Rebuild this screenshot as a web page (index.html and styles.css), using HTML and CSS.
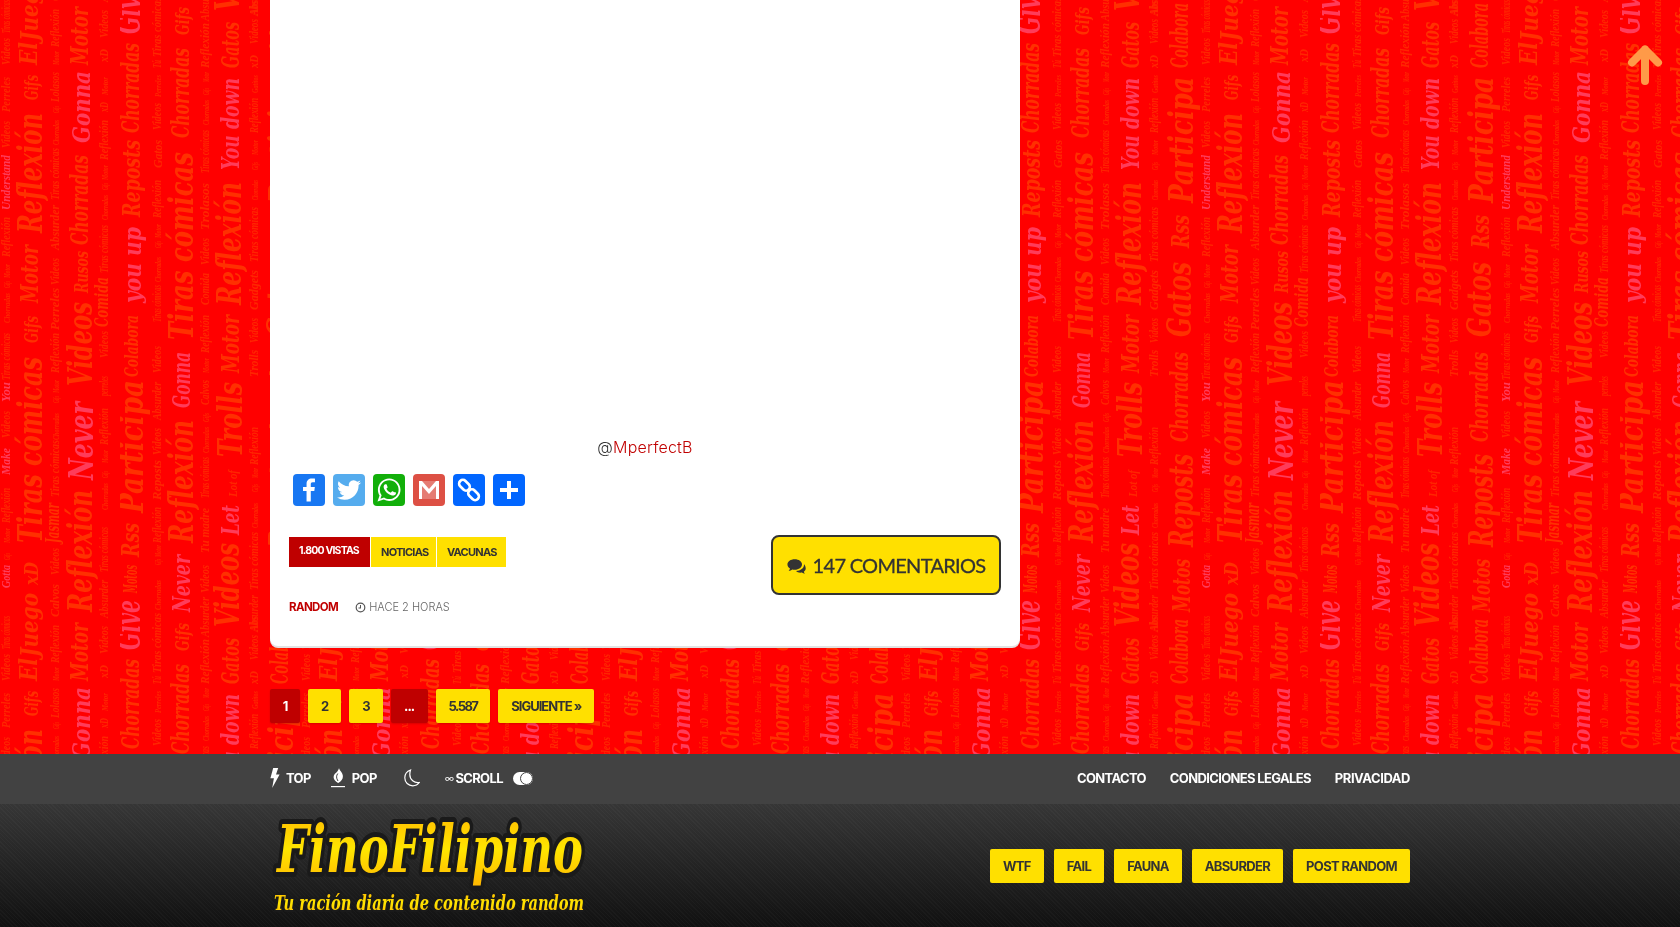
FILE: index.html
```html
<!DOCTYPE html>
<html lang="es">
<head>
<meta charset="utf-8">
<title>FinoFilipino</title>
<link rel="stylesheet" href="styles.css">
</head>
<body>
<svg class="wall" width="1680" height="927" aria-hidden="true">
  <defs>
    <g id="words">
      <!-- A -->
      <text class="lg o" transform="translate(19,133) rotate(-90)" textLength="90" lengthAdjust="spacingAndGlyphs">Chorradas</text>
      <text class="lg o" transform="translate(20,217) rotate(-90)" textLength="77" lengthAdjust="spacingAndGlyphs">Reposts</text>
      <text class="lg p" transform="translate(21,303) rotate(-90)" textLength="76" lengthAdjust="spacingAndGlyphs">you up</text>
      <text class="md o" transform="translate(18,377) rotate(-90)" textLength="62" lengthAdjust="spacingAndGlyphs">Colabora</text>
      <text class="xl o" transform="translate(23,513) rotate(-90)" textLength="133" lengthAdjust="spacingAndGlyphs">Participa</text>
      <text class="lg o" transform="translate(19,557) rotate(-90)" textLength="34" lengthAdjust="spacingAndGlyphs">Rss</text>
      <text class="md o" transform="translate(17,593) rotate(-90)" textLength="28" lengthAdjust="spacingAndGlyphs">Motos</text>
      <text class="xl p" transform="translate(20,650) rotate(-90)" textLength="50" lengthAdjust="spacingAndGlyphs">Give</text>
      <!-- B -->
      <text class="s o" transform="translate(41,673) rotate(-90)" textLength="60" lengthAdjust="spacingAndGlyphs">Tiras cómicas</text>
      <text class="s o" transform="translate(41,68) rotate(-90)" textLength="8" lengthAdjust="spacingAndGlyphs">Tú</text>
      <text class="xs o" transform="translate(41,97) rotate(-90)" textLength="22" lengthAdjust="spacingAndGlyphs">Perreles</text>
      <text class="s o" transform="translate(41,130) rotate(-90)" textLength="27" lengthAdjust="spacingAndGlyphs">Videos</text>
      <text class="s o" transform="translate(42,168) rotate(-90)" textLength="28" lengthAdjust="spacingAndGlyphs">Gatos</text>
      <text class="s o" transform="translate(41,218) rotate(-90)" textLength="38" lengthAdjust="spacingAndGlyphs">Reflexión</text>
      <text class="xs o" transform="translate(41,238) rotate(-90)" textLength="14" lengthAdjust="spacingAndGlyphs">Motor</text>
      <text class="xs o" transform="translate(41,248) rotate(-90)" textLength="7" lengthAdjust="spacingAndGlyphs">Gifs</text>
      <text class="xs o" transform="translate(41,282) rotate(-90)" textLength="25" lengthAdjust="spacingAndGlyphs">Chorradas</text>
      <text class="s o" transform="translate(41,322) rotate(-90)" textLength="37" lengthAdjust="spacingAndGlyphs">Tiras cómicas</text>
      <text class="s o" transform="translate(41,373) rotate(-90)" textLength="27" lengthAdjust="spacingAndGlyphs">Videos</text>
      <text class="s o" transform="translate(41,420) rotate(-90)" textLength="38" lengthAdjust="spacingAndGlyphs">Absurder</text>
      <text class="s o" transform="translate(41,455) rotate(-90)" textLength="27" lengthAdjust="spacingAndGlyphs">Videos</text>
      <text class="s o" transform="translate(41,500) rotate(-90)" textLength="40" lengthAdjust="spacingAndGlyphs">Reposts</text>
      <text class="s o" transform="translate(41,543) rotate(-90)" textLength="36" lengthAdjust="spacingAndGlyphs">Reflexión</text>
      <text class="xs o" transform="translate(41,557) rotate(-90)" textLength="12" lengthAdjust="spacingAndGlyphs">Motor</text>
      <text class="xs o" transform="translate(41,565) rotate(-90)" textLength="6" lengthAdjust="spacingAndGlyphs">Gifs</text>
      <text class="xs o" transform="translate(41,610) rotate(-90)" textLength="30" lengthAdjust="spacingAndGlyphs">Chorradas</text>
      <!-- C -->
      <text class="md o" transform="translate(69,35) rotate(-90)" textLength="28" lengthAdjust="spacingAndGlyphs">Gifs</text>
      <text class="lg o" transform="translate(69,138) rotate(-90)" textLength="90" lengthAdjust="spacingAndGlyphs">Chorradas</text>
      <text class="xl o" transform="translate(73,340) rotate(-90)" textLength="188" lengthAdjust="spacingAndGlyphs">Tiras cómicas</text>
      <text class="lg p" transform="translate(70,408) rotate(-90)" textLength="56" lengthAdjust="spacingAndGlyphs">Gonna</text>
      <text class="xl o" transform="translate(73,543) rotate(-90)" textLength="123" lengthAdjust="spacingAndGlyphs">Reflexión</text>
      <text class="lg p" transform="translate(70,612) rotate(-90)" textLength="57" lengthAdjust="spacingAndGlyphs">Never</text>
      <!-- D -->
      <text class="s o" transform="translate(89,637) rotate(-90)" textLength="40" lengthAdjust="spacingAndGlyphs">Absurder</text>
      <text class="s o" transform="translate(89,68) rotate(-90)" textLength="45" lengthAdjust="spacingAndGlyphs">Reflexión</text>
      <text class="xs o" transform="translate(89,82) rotate(-90)" textLength="10" lengthAdjust="spacingAndGlyphs">Motor</text>
      <text class="xs o" transform="translate(89,95) rotate(-90)" textLength="7" lengthAdjust="spacingAndGlyphs">Gifs</text>
      <text class="xs o" transform="translate(89,125) rotate(-90)" textLength="25" lengthAdjust="spacingAndGlyphs">Chorradas</text>
      <text class="s o" transform="translate(89,173) rotate(-90)" textLength="43" lengthAdjust="spacingAndGlyphs">Tiras cómicas</text>
      <text class="s o" transform="translate(89,230) rotate(-90)" textLength="47" lengthAdjust="spacingAndGlyphs">Trolasos</text>
      <text class="s o" transform="translate(89,265) rotate(-90)" textLength="27" lengthAdjust="spacingAndGlyphs">Videos</text>
      <text class="s o" transform="translate(89,305) rotate(-90)" textLength="32" lengthAdjust="spacingAndGlyphs">Comida</text>
      <text class="s o" transform="translate(89,353) rotate(-90)" textLength="38" lengthAdjust="spacingAndGlyphs">Reflexión</text>
      <text class="xs o" transform="translate(89,373) rotate(-90)" textLength="15" lengthAdjust="spacingAndGlyphs">Motor</text>
      <text class="s o" transform="translate(89,405) rotate(-90)" textLength="25" lengthAdjust="spacingAndGlyphs">Calvos</text>
      <text class="xs o" transform="translate(89,422) rotate(-90)" textLength="9" lengthAdjust="spacingAndGlyphs">Gifs</text>
      <text class="xs o" transform="translate(89,453) rotate(-90)" textLength="26" lengthAdjust="spacingAndGlyphs">Chorradas</text>
      <text class="s o" transform="translate(89,498) rotate(-90)" textLength="41" lengthAdjust="spacingAndGlyphs">Tiras cómicas</text>
      <text class="s o" transform="translate(89,553) rotate(-90)" textLength="45" lengthAdjust="spacingAndGlyphs">Tu madre</text>
      <text class="s o" transform="translate(89,593) rotate(-90)" textLength="28" lengthAdjust="spacingAndGlyphs">Videos</text>
      <!-- E -->
      <text class="xl o" transform="translate(119,627) rotate(-90)" textLength="84" lengthAdjust="spacingAndGlyphs">Videos</text>
      <text class="lg o" transform="translate(119,68) rotate(-90)" textLength="46" lengthAdjust="spacingAndGlyphs">Gatos</text>
      <text class="lg p" transform="translate(119,170) rotate(-90)" textLength="92" lengthAdjust="spacingAndGlyphs">You down</text>
      <text class="xl o" transform="translate(121,305) rotate(-90)" textLength="123" lengthAdjust="spacingAndGlyphs">Reflexión</text>
      <text class="lg o" transform="translate(119,373) rotate(-90)" textLength="58" lengthAdjust="spacingAndGlyphs">Motor</text>
      <text class="xl o" transform="translate(122,457) rotate(-90)" textLength="75" lengthAdjust="spacingAndGlyphs">Trolls</text>
      <text class="s o" transform="translate(117,497) rotate(-90)" textLength="27" lengthAdjust="spacingAndGlyphs">Lot of</text>
      <text class="lg p" transform="translate(119,535) rotate(-90)" textLength="30" lengthAdjust="spacingAndGlyphs">Let</text>
      <!-- F -->
      <text class="s o" transform="translate(138,15) rotate(-90)" textLength="15" lengthAdjust="spacingAndGlyphs">Abs</text>
      <text class="s o" transform="translate(138,44) rotate(-90)" textLength="25" lengthAdjust="spacingAndGlyphs">Videos</text>
      <text class="s o" transform="translate(138,68) rotate(-90)" textLength="13" lengthAdjust="spacingAndGlyphs">xD</text>
      <text class="xs o" transform="translate(138,93) rotate(-90)" textLength="18" lengthAdjust="spacingAndGlyphs">Gatitos</text>
      <text class="s o" transform="translate(138,133) rotate(-90)" textLength="35" lengthAdjust="spacingAndGlyphs">Reflexión</text>
      <text class="xs o" transform="translate(138,155) rotate(-90)" textLength="15" lengthAdjust="spacingAndGlyphs">Motor</text>
      <text class="xs o" transform="translate(138,170) rotate(-90)" textLength="8" lengthAdjust="spacingAndGlyphs">Gifs</text>
      <text class="xs o" transform="translate(138,200) rotate(-90)" textLength="20" lengthAdjust="spacingAndGlyphs">Chorradas</text>
      <text class="s o" transform="translate(138,262) rotate(-90)" textLength="55" lengthAdjust="spacingAndGlyphs">Tiras cómicas</text>
      <text class="s o" transform="translate(138,310) rotate(-90)" textLength="40" lengthAdjust="spacingAndGlyphs">Gadgets</text>
      <text class="s o" transform="translate(138,343) rotate(-90)" textLength="25" lengthAdjust="spacingAndGlyphs">Videos</text>
      <text class="s o" transform="translate(138,377) rotate(-90)" textLength="27" lengthAdjust="spacingAndGlyphs">Trolls</text>
      <text class="s o" transform="translate(138,465) rotate(-90)" textLength="38" lengthAdjust="spacingAndGlyphs">Reflexión</text>
      <text class="xs o" transform="translate(138,478) rotate(-90)" textLength="10" lengthAdjust="spacingAndGlyphs">Motor</text>
      <text class="xs o" transform="translate(138,492) rotate(-90)" textLength="8" lengthAdjust="spacingAndGlyphs">Gifs</text>
      <text class="xs o" transform="translate(138,528) rotate(-90)" textLength="25" lengthAdjust="spacingAndGlyphs">Chorradas</text>
      <text class="s o" transform="translate(138,590) rotate(-90)" textLength="58" lengthAdjust="spacingAndGlyphs">Tiras cómicas</text>
      <text class="s o" transform="translate(138,632) rotate(-90)" textLength="37" lengthAdjust="spacingAndGlyphs">Absurder</text>
      <!-- G -->
      <text class="lg o" transform="translate(168,68) rotate(-90)" textLength="65" lengthAdjust="spacingAndGlyphs">Colabora</text>
      <text class="xl o" transform="translate(173,203) rotate(-90)" textLength="126" lengthAdjust="spacingAndGlyphs">Participa</text>
      <text class="lg o" transform="translate(169,248) rotate(-90)" textLength="33" lengthAdjust="spacingAndGlyphs">Rss</text>
      <text class="xl o" transform="translate(171,337) rotate(-90)" textLength="75" lengthAdjust="spacingAndGlyphs">Gatos</text>
      <text class="lg o" transform="translate(168,442) rotate(-90)" textLength="90" lengthAdjust="spacingAndGlyphs">Chorradas</text>
      <text class="xl o" transform="translate(173,547) rotate(-90)" textLength="93" lengthAdjust="spacingAndGlyphs">Reposts</text>
      <text class="lg o" transform="translate(170,612) rotate(-90)" textLength="53" lengthAdjust="spacingAndGlyphs">Motos</text>
      <!-- H -->
      <text class="s o" transform="translate(190,33) rotate(-90)" textLength="33" lengthAdjust="spacingAndGlyphs">Tiras cómicas</text>
      <text class="s o" transform="translate(190,65) rotate(-90)" textLength="27" lengthAdjust="spacingAndGlyphs">Videos</text>
      <text class="s o" transform="translate(190,112) rotate(-90)" textLength="35" lengthAdjust="spacingAndGlyphs">Perreles</text>
      <text class="s o" transform="translate(190,148) rotate(-90)" textLength="27" lengthAdjust="spacingAndGlyphs">Videos</text>
      <text class="s p" transform="translate(190,210) rotate(-90)" textLength="55" lengthAdjust="spacingAndGlyphs">Understand</text>
      <text class="s o" transform="translate(190,257) rotate(-90)" textLength="40" lengthAdjust="spacingAndGlyphs">Reflexión</text>
      <text class="xs o" transform="translate(190,278) rotate(-90)" textLength="14" lengthAdjust="spacingAndGlyphs">Motor</text>
      <text class="xs o" transform="translate(190,288) rotate(-90)" textLength="7" lengthAdjust="spacingAndGlyphs">Gifs</text>
      <text class="xs o" transform="translate(190,323) rotate(-90)" textLength="30" lengthAdjust="spacingAndGlyphs">Chorradas</text>
      <text class="s o" transform="translate(190,380) rotate(-90)" textLength="47" lengthAdjust="spacingAndGlyphs">Tiras cómicas</text>
      <text class="s p" transform="translate(190,402) rotate(-90)" textLength="20" lengthAdjust="spacingAndGlyphs">You</text>
      <text class="s o" transform="translate(190,438) rotate(-90)" textLength="27" lengthAdjust="spacingAndGlyphs">Videos</text>
      <text class="s p" transform="translate(190,475) rotate(-90)" textLength="27" lengthAdjust="spacingAndGlyphs">Make</text>
      <text class="s o" transform="translate(190,523) rotate(-90)" textLength="35" lengthAdjust="spacingAndGlyphs">Reflexión</text>
      <text class="xs o" transform="translate(190,543) rotate(-90)" textLength="15" lengthAdjust="spacingAndGlyphs">Motor</text>
      <text class="xs o" transform="translate(190,560) rotate(-90)" textLength="7" lengthAdjust="spacingAndGlyphs">Gifs</text>
      <text class="s p" transform="translate(190,588) rotate(-90)" textLength="23" lengthAdjust="spacingAndGlyphs">Gotta</text>
      <!-- I -->
      <text class="lg o" transform="translate(217,65) rotate(-90)" textLength="23" lengthAdjust="spacingAndGlyphs">El</text>
      <text class="md o" transform="translate(218,100) rotate(-90)" textLength="25" lengthAdjust="spacingAndGlyphs">Gifs</text>
      <text class="xl o" transform="translate(222,233) rotate(-90)" textLength="120" lengthAdjust="spacingAndGlyphs">Reflexión</text>
      <text class="lg o" transform="translate(218,303) rotate(-90)" textLength="58" lengthAdjust="spacingAndGlyphs">Motor</text>
      <text class="md o" transform="translate(218,343) rotate(-90)" textLength="27" lengthAdjust="spacingAndGlyphs">Gifs</text>
      <text class="xl o" transform="translate(222,543) rotate(-90)" textLength="186" lengthAdjust="spacingAndGlyphs">Tiras cómicas</text>
      <text class="md o" transform="translate(218,585) rotate(-90)" textLength="23" lengthAdjust="spacingAndGlyphs">xD</text>
      <text class="lg o" transform="translate(218,657) rotate(-90)" textLength="64" lengthAdjust="spacingAndGlyphs">Juego</text>
      <!-- J -->
      <text class="s o" transform="translate(239,47) rotate(-90)" textLength="38" lengthAdjust="spacingAndGlyphs">Reflexión</text>
      <text class="xs o" transform="translate(239,65) rotate(-90)" textLength="14" lengthAdjust="spacingAndGlyphs">Motor</text>
      <text class="s o" transform="translate(239,102) rotate(-90)" textLength="30" lengthAdjust="spacingAndGlyphs">Lolasos</text>
      <text class="xs o" transform="translate(239,113) rotate(-90)" textLength="7" lengthAdjust="spacingAndGlyphs">Gifs</text>
      <text class="xs o" transform="translate(239,145) rotate(-90)" textLength="25" lengthAdjust="spacingAndGlyphs">Chorradas</text>
      <text class="s o" transform="translate(239,200) rotate(-90)" textLength="52" lengthAdjust="spacingAndGlyphs">Tiras cómicas</text>
      <text class="s o" transform="translate(239,250) rotate(-90)" textLength="45" lengthAdjust="spacingAndGlyphs">Absurder</text>
      <text class="s o" transform="translate(239,285) rotate(-90)" textLength="27" lengthAdjust="spacingAndGlyphs">Videos</text>
      <text class="s o" transform="translate(239,330) rotate(-90)" textLength="42" lengthAdjust="spacingAndGlyphs">Perreles</text>
      <text class="s o" transform="translate(239,373) rotate(-90)" textLength="40" lengthAdjust="spacingAndGlyphs">Reflexión</text>
      <text class="xs o" transform="translate(239,393) rotate(-90)" textLength="13" lengthAdjust="spacingAndGlyphs">Motor</text>
      <text class="xs o" transform="translate(239,403) rotate(-90)" textLength="7" lengthAdjust="spacingAndGlyphs">Gifs</text>
      <text class="xs o" transform="translate(239,440) rotate(-90)" textLength="27" lengthAdjust="spacingAndGlyphs">Chorradas</text>
      <text class="s o" transform="translate(239,497) rotate(-90)" textLength="57" lengthAdjust="spacingAndGlyphs">Tiras cómicas</text>
      <text class="md o" transform="translate(239,543) rotate(-90)" textLength="40" lengthAdjust="spacingAndGlyphs">Jasmar</text>
      <text class="s o" transform="translate(239,575) rotate(-90)" textLength="27" lengthAdjust="spacingAndGlyphs">Videos</text>
      <text class="s o" transform="translate(239,617) rotate(-90)" textLength="33" lengthAdjust="spacingAndGlyphs">Calvos</text>
      <!-- K -->
      <text class="lg o" transform="translate(268,65) rotate(-90)" textLength="58" lengthAdjust="spacingAndGlyphs">Motor</text>
      <text class="lg p" transform="translate(270,143) rotate(-90)" textLength="72" lengthAdjust="spacingAndGlyphs">Gonna</text>
      <text class="lg o" transform="translate(268,245) rotate(-90)" textLength="90" lengthAdjust="spacingAndGlyphs">Chorradas</text>
      <text class="md o" transform="translate(268,293) rotate(-90)" textLength="42" lengthAdjust="spacingAndGlyphs">Rusos</text>
      <text class="xl o" transform="translate(272,386) rotate(-90)" textLength="84" lengthAdjust="spacingAndGlyphs">Videos</text>
      <text class="xl p" transform="translate(273,480) rotate(-90)" textLength="78" lengthAdjust="spacingAndGlyphs">Never</text>
      <text class="xl o" transform="translate(272,612) rotate(-90)" textLength="122" lengthAdjust="spacingAndGlyphs">Reflexión</text>
      <!-- L -->
      <text class="s o" transform="translate(288,38) rotate(-90)" textLength="28" lengthAdjust="spacingAndGlyphs">Videos</text>
      <text class="s o" transform="translate(288,62) rotate(-90)" textLength="13" lengthAdjust="spacingAndGlyphs">xD</text>
      <text class="xs o" transform="translate(288,95) rotate(-90)" textLength="18" lengthAdjust="spacingAndGlyphs">Motor</text>
      <text class="s o" transform="translate(288,112) rotate(-90)" textLength="10" lengthAdjust="spacingAndGlyphs">xD</text>
      <text class="s o" transform="translate(288,160) rotate(-90)" textLength="40" lengthAdjust="spacingAndGlyphs">Reflexión</text>
      <text class="xs o" transform="translate(288,180) rotate(-90)" textLength="15" lengthAdjust="spacingAndGlyphs">Motor</text>
      <text class="xs o" transform="translate(288,190) rotate(-90)" textLength="7" lengthAdjust="spacingAndGlyphs">Gifs</text>
      <text class="xs o" transform="translate(288,220) rotate(-90)" textLength="25" lengthAdjust="spacingAndGlyphs">Chorradas</text>
      <text class="s o" transform="translate(288,273) rotate(-90)" textLength="48" lengthAdjust="spacingAndGlyphs">Tiras cómicas</text>
      <text class="md o" transform="translate(288,327) rotate(-90)" textLength="50" lengthAdjust="spacingAndGlyphs">Comida</text>
      <text class="s o" transform="translate(288,358) rotate(-90)" textLength="27" lengthAdjust="spacingAndGlyphs">Videos</text>
      <text class="s o" transform="translate(288,396) rotate(-90)" textLength="20" lengthAdjust="spacingAndGlyphs">perreles</text>
      <text class="s o" transform="translate(288,445) rotate(-90)" textLength="37" lengthAdjust="spacingAndGlyphs">Reflexión</text>
      <text class="xs o" transform="translate(288,463) rotate(-90)" textLength="13" lengthAdjust="spacingAndGlyphs">Motor</text>
      <text class="xs o" transform="translate(288,478) rotate(-90)" textLength="7" lengthAdjust="spacingAndGlyphs">Gifs</text>
      <text class="xs o" transform="translate(288,510) rotate(-90)" textLength="27" lengthAdjust="spacingAndGlyphs">Chorradas</text>
      <text class="s o" transform="translate(288,572) rotate(-90)" textLength="45" lengthAdjust="spacingAndGlyphs">Tiras cómicas</text>
      <text class="s o" transform="translate(288,618) rotate(-90)" textLength="38" lengthAdjust="spacingAndGlyphs">Absurder</text>
    </g>
    <pattern id="tile" patternUnits="userSpaceOnUse" x="1020" y="0" width="300" height="616">
      <use href="#words"/>
      <use href="#words" y="-616"/>
      <use href="#words" y="616"/>
    </pattern>
  </defs>
  <rect width="1680" height="927" fill="#f00"/>
  <rect width="1680" height="927" fill="url(#tile)"/>
</svg>

<svg class="to-top" width="36" height="42" viewBox="0 0 36 42" aria-hidden="true">
  <path d="M18 37V5.500M5 18.500L18 5.500l13 13" fill="none" stroke="#ff9a48" stroke-width="8" stroke-linecap="round" stroke-linejoin="round"/>
</svg>

<div class="page">
  <main class="content">
    <article class="card">
      <div class="embed"></div>
      <p class="credit">@<a class="credit-link" href="#">MperfectB</a></p>
      <div class="share">
        <a class="share-btn fb" href="#"><svg viewBox="0 0 32 32"><path fill="#fff" d="M17.78 27.5V17.008h3.522l.527-4.09h-4.05v-2.61c0-1.182.33-1.99 2.023-1.99h2.166V4.66c-.375-.05-1.66-.16-3.155-.16-3.123 0-5.26 1.905-5.26 5.405v3.016h-3.53v4.09h3.53V27.5h4.223z"/></svg></a>
        <a class="share-btn tw" href="#"><svg viewBox="0 0 32 32"><path fill="#fff" d="M28 8.557a10 10 0 0 1-2.828.775 4.93 4.93 0 0 0 2.166-2.725 9.7 9.7 0 0 1-3.13 1.194 4.92 4.92 0 0 0-3.593-1.55 4.924 4.924 0 0 0-4.794 6.049c-4.09-.21-7.72-2.17-10.15-5.15a4.94 4.94 0 0 0-.665 2.477c0 1.71.87 3.214 2.19 4.1a5 5 0 0 1-2.23-.616v.06c0 2.39 1.7 4.38 3.952 4.83-.414.115-.85.174-1.297.174q-.476-.001-.928-.086a4.935 4.935 0 0 0 4.6 3.42 9.9 9.9 0 0 1-6.114 2.107q-.597 0-1.175-.068a13.95 13.95 0 0 0 7.55 2.213c9.056 0 14.01-7.507 14.01-14.013q0-.32-.015-.637c.96-.695 1.795-1.56 2.455-2.55z"/></svg></a>
        <a class="share-btn wa" href="#"><svg viewBox="0 0 32 32"><path fill="#fff" fill-rule="evenodd" d="M16.21 4.41C9.973 4.41 4.917 9.465 4.917 15.7c0 2.134.592 4.13 1.62 5.832L4.5 27.59l6.25-2.002a11.24 11.24 0 0 0 5.46 1.404c6.234 0 11.29-5.055 11.29-11.29 0-6.237-5.056-11.292-11.29-11.292zm0 20.69c-1.91 0-3.69-.57-5.173-1.553l-3.61 1.156 1.173-3.49a9.35 9.35 0 0 1-1.79-5.512c0-5.18 4.217-9.4 9.4-9.4s9.397 4.22 9.397 9.4c0 5.188-4.214 9.4-9.397 9.4z"/><path fill="#fff" d="M21.5 18.27c-.28-.15-1.67-.9-1.93-1.01-.27-.11-.46-.16-.66.12-.2.28-.78.91-.95 1.1-.18.18-.35.2-.63.05-.28-.16-1.2-.5-2.26-1.52-.83-.8-1.37-1.76-1.53-2.06-.16-.29-.02-.44.15-.58.15-.12.34-.33.51-.49.17-.16.23-.28.35-.47.12-.19.07-.36 0-.51-.07-.15-.6-1.58-.83-2.16-.24-.58-.48-.49-.66-.5-.17-.01-.36-.02-.56-.02-.2 0-.52.07-.8.36-.28.29-1.05 1.02-1.05 2.49 0 1.47 1.08 2.89 1.23 3.09.15.2 2.09 3.37 5.2 4.55 3.1 1.18 3.1.78 3.66.73.56-.05 1.79-.75 2.04-1.47.25-.72.25-1.34.17-1.47-.08-.13-.28-.2-.56-.35z"/></svg></a>
        <a class="share-btn gm" href="#"><svg viewBox="0 0 32 32"><path fill="#fff" fill-opacity=".25" d="M6 7h20v18H6z"/><path fill="#fff" d="M6 7h3l7 8 7-8h3v18h-3V12l-7 8-7-8v13H6z"/></svg></a>
        <a class="share-btn lk" href="#"><svg viewBox="0 0 32 32"><g fill="none" stroke="#fff" stroke-width="2.6"><rect x="5.500" y="7.500" width="12" height="7.500" rx="3.700" transform="rotate(45 11.500 11.200)"/><rect x="14.500" y="17" width="12" height="7.500" rx="3.700" transform="rotate(45 20.500 20.800)"/></g></svg></a>
        <a class="share-btn sh" href="#"><svg viewBox="0 0 32 32"><path fill="#fff" d="M14 7h4v7h7v4h-7v7h-4v-7H7v-4h7z"/></svg></a>
      </div>
      <div class="meta">
        <div class="meta-left">
          <div class="tags">
            <span class="tag tag-views">1.800 VISTAS</span>
            <a class="tag tag-news" href="#">NOTICIAS</a>
            <a class="tag tag-vax" href="#">VACUNAS</a>
          </div>
          <div class="info">
            <a class="author" href="#">RANDOM</a>
            <span class="time">
              <svg class="clock" viewBox="0 0 12 12" width="11" height="11"><circle cx="6" cy="6" r="4.700" fill="none" stroke="#555" stroke-width="1.300"/><path d="M6 3.200V6.500H3.800" fill="none" stroke="#555" stroke-width="1.100"/></svg>
              HACE 2 HORAS
            </span>
          </div>
        </div>
        <a class="comments" href="#">
          <svg class="comments-icon" viewBox="0 0 22 18" width="20" height="17"><path fill="#333" d="M8.500 1C4 1 .5 3.500.5 6.700c0 1.800 1.100 3.400 2.800 4.500-.2.900-.8 1.800-1.500 2.500 1.600-.1 3-.7 4-1.500.8.200 1.700.3 2.700.3 4.500 0 8-2.600 8-5.800S13 1 8.500 1z"/><path fill="#333" d="M18.600 6.300c.1.300.1.500.1.800 0 3.800-3.800 6.700-8.700 6.900 1 1.100 2.700 1.800 4.600 1.800.6 0 1.200-.1 1.700-.2.900.7 2.200 1.200 3.400 1.300-.6-.6-1-1.400-1.200-2.100 1.300-.9 2.100-2.100 2.100-3.500 0-1.900-.8-3.700-2-5z"/></svg>
          <span>147 COMENTARIOS</span>
        </a>
      </div>
    </article>
    <nav class="pager">
      <a class="page-btn current" href="#">1</a>
      <a class="page-btn" href="#">2</a>
      <a class="page-btn" href="#">3</a>
      <span class="page-btn gap">...</span>
      <a class="page-btn page-last" href="#">5.587</a>
      <a class="page-btn" href="#">SIGUIENTE »</a>
    </nav>
  </main>

  <footer class="footer">
    <div class="bar">
      <div class="wrap bar-inner">
        <div class="bar-left">
          <a class="bar-link link-top" href="#"><svg width="10" height="20" viewBox="0 0 10 20"><path fill="#fff" d="M3.200 0h5L6 6.500h3.600L2.200 20l1.700-9.800H.4z"/></svg>TOP</a>
          <a class="bar-link link-pop" href="#"><svg width="14" height="20" viewBox="0 0 14 20"><path fill="#fff" d="M8 0c.4 2.500 3.600 4.400 3.900 8 .2 3-1.800 5.500-4.700 7-1-.7-4.600-2.500-4.600-6 0-2.800 2.300-3.700 3.700-5.500C7 2.500 7.800 1.300 8 0z"/><path fill="none" stroke="#424242" d="M6.800 5.500c-1.500 2-1.800 4.500.2 7.500"/><path fill="#fff" d="M0 18h14v1.200H0z"/></svg>POP</a>
          <a class="moon" href="#"><svg width="16" height="18" viewBox="0 0 16 18"><path fill="none" stroke="#fff" stroke-width="1.200" d="M6.500 1C3 2.200.8 5.200.8 8.800c0 4.500 3.500 8 8 8 2.800 0 5-1.200 6.500-3.300-5 .8-9.500-2.800-9.500-8 0-1.500.2-3 .7-4.500z"/></svg></a>
          <span class="scroll"><span class="inf">∞</span>SCROLL<span class="toggle"><span class="knob"></span></span></span>
        </div>
        <div class="bar-right">
          <a class="bar-link" href="#">CONTACTO</a>
          <a class="bar-link" href="#">CONDICIONES LEGALES</a>
          <a class="bar-link bar-last" href="#">PRIVACIDAD</a>
        </div>
      </div>
    </div>
    <div class="foot-main">
      <a class="logo" href="#">
        <svg width="430" height="123" viewBox="0 0 430 123">
          <defs>
            <linearGradient id="gold" x1="0" y1="0" x2="0" y2="1"><stop offset="0" stop-color="#ffb800"/><stop offset=".5" stop-color="#ffe600"/><stop offset="1" stop-color="#ffb400"/></linearGradient>
          </defs>
          <text class="logo-name" x="7" y="68" textLength="306" lengthAdjust="spacingAndGlyphs">FinoFilipino</text>
          <text class="logo-tag" x="4" y="106" textLength="310" lengthAdjust="spacingAndGlyphs">Tu ración diaria de contenido random</text>
        </svg>
      </a>
      <div class="cats">
        <a class="cat" href="#">WTF</a>
        <a class="cat" href="#">FAIL</a>
        <a class="cat" href="#">FAUNA</a>
        <a class="cat" href="#">ABSURDER</a>
        <a class="cat" href="#">POST RANDOM</a>
      </div>
    </div>
  </footer>
</div>
</body>
</html>
```
FILE: styles.css
```css
* { box-sizing: border-box; }
html, body { margin: 0; height: 927px; overflow: hidden; }
body { font-family: "Inter", "Liberation Sans", sans-serif; color: #333; background: #f00; }
a { text-decoration: none; color: inherit; }

/* wallpaper */
.wall { position: fixed; left: 0; top: 0; z-index: -1; }
.wall text { font-family: "DejaVu Serif", serif; font-style: italic; font-weight: 700; }
.o { fill: #ff3000; }
.p { fill: #ff3c5a; }
.xl { font-size: 33px; }
.lg { font-size: 24px; }
.md { font-size: 18px; }
.wall .s { font-family: "Liberation Serif", serif; font-size: 12px; }
.wall .xs { font-family: "Liberation Serif", serif; font-size: 8px; }
.s.o, .xs.o { fill: #ff2600; }

.to-top { position: fixed; left: 1627px; top: 44px; }

.page { height: 927px; display: flex; flex-direction: column; }
.content { width: 1140px; margin: 0 auto; flex: 1; }
.wrap { width: 1140px; margin: 0 auto; }

/* card */
.card {
  width: 750px; height: 646px; padding: 0 19px;
  background: #fff; border-radius: 0 0 8px 8px;
  box-shadow: 0 2px 0 #e2e2e2;
  display: flex; flex-direction: column;
}
.embed { height: 436px; flex: none; }
.credit {
  margin: 0; height: 22px; line-height: 22px; text-align: center;
  font-size: 16px; font-weight: 300; letter-spacing: 0.2px; color: #333;
}
.credit-link { color: #c00000; }
.share { display: flex; gap: 8px; margin: 16px 0 0 4px; }
.share-btn { width: 32px; height: 32px; border-radius: 4px; display: block; }
.share-btn svg { display: block; width: 32px; height: 32px; }
.fb { background: #1877f2; }
.tw { background: #55acee; }
.wa { background: #12af0a; }
.gm { background: #dd5044; }
.lk, .sh { background: #0166ff; }

.meta { display: flex; justify-content: space-between; align-items: flex-start; margin-top: 29px; }
.meta-left { padding-top: 2px; }
.tags { display: flex; gap: 1px; }
.tag {
  height: 30px; line-height: 30px;
  background: #ffe000; color: #333;
  font-size: 11px; font-weight: 700; letter-spacing: -0.75px; white-space: nowrap;
}
.tag-views { background: #bf0000; color: #fff; line-height: 27px; width: 81px; padding-left: 10px; font-size: 10.5px; letter-spacing: -0.8px; }
.tag-news { width: 65px; padding-left: 10px; }
.tag-vax { width: 69px; padding-left: 10px; }
.info { display: flex; align-items: center; gap: 17px; margin-top: 32px; height: 16px; }
.author { color: #c00000; font-weight: 700; font-size: 11.5px; letter-spacing: -0.6px; }
.time { color: #666; font-weight: 300; letter-spacing: 0px; display: flex; align-items: center; gap: 3px; font-size: 11px; }
.clock { display: block; }
.comments {
  width: 230px; height: 60px; display: flex; align-items: center; justify-content: center; gap: 6px;
  background: #ffe000; border: 2px solid #333; border-radius: 8px;
  font-family: "Lato", sans-serif; font-size: 20px; color: #333; font-weight: 400; letter-spacing: -0.7px;
  -webkit-text-stroke: 0.3px #333; white-space: nowrap;
}
.comments-icon { display: block; flex: none; margin-top: 2px; }

/* pager */
.pager { display: flex; gap: 8px; margin-top: 43px; }
.page-btn {
  height: 34px; line-height: 34px; padding: 0 13px; border-radius: 2px;
  background: #ffe000; color: #333; font-size: 13px; font-weight: 700; letter-spacing: -1px; white-space: nowrap;
  box-shadow: 0 1px 2px rgba(0,0,0,.15);
}
.page-last { letter-spacing: -1.6px; }
.current, .gap { background: #bf0000; color: #fff; }
.current { padding: 0; width: 30px; text-align: center; }
.gap { padding: 0; width: 37px; text-align: center; }

/* footer */
.footer { height: 173px; flex: none; display: flex; flex-direction: column; }
.bar { height: 50px; background: #424242; flex: none; }
.bar-inner { display: flex; justify-content: space-between; align-items: center; height: 48px; }
.bar-left, .bar-right { display: flex; align-items: center; }
.bar-right { gap: 24px; }
.bar-link { color: #fff; font-size: 13px; font-weight: 700; letter-spacing: -0.65px; display: flex; align-items: center; white-space: nowrap; }
.bar-last { letter-spacing: -0.45px; }
.link-top svg { margin-right: 6px; }
.link-top { margin-right: 20px; }
.link-pop svg { margin-right: 7px; }
.moon { margin: 0 25px 0 27px; display: block; height: 18px; }
.moon svg { display: block; }
.scroll { display: flex; align-items: center; color: #fff; font-size: 13px; font-weight: 700; letter-spacing: -0.65px; }
.inf { font-weight: 400; margin-right: 2px; font-size: 10px; }
.toggle { width: 20px; height: 13px; margin-left: 10px; background: #fff; border-radius: 7px; position: relative; display: block; }
.knob { position: absolute; right: 0; top: 0; width: 13px; height: 13px; border-radius: 50%; background: #fff; border: 1.5px solid #424242; }

.foot-main {
  flex: 1; display: flex; justify-content: space-between; padding: 0 270px; align-items: flex-start;
  background:
    repeating-linear-gradient(45deg, rgba(255,255,255,.022) 0 1px, transparent 1px 3px),
    linear-gradient(#363636, #111);
}
.logo { display: block; }
.logo svg { display: block; }
.logo-name, .logo-tag {
  font-family: "DejaVu Serif", serif; font-style: italic; font-weight: 700;
  fill: url(#gold); stroke: #1a1a1a; paint-order: stroke; stroke-linejoin: round;
}
.logo-name { font-size: 66px; stroke-width: 10px; }
.logo-tag { font-size: 20px; stroke-width: 5px; }
.cats { display: flex; gap: 10px; margin-top: 45px; }
.cat {
  height: 34px; line-height: 34px; padding: 0 13px; border-radius: 2px;
  background: #ffe000; color: #333; font-size: 13px; font-weight: 700; letter-spacing: -0.68px; white-space: nowrap;
}
```
